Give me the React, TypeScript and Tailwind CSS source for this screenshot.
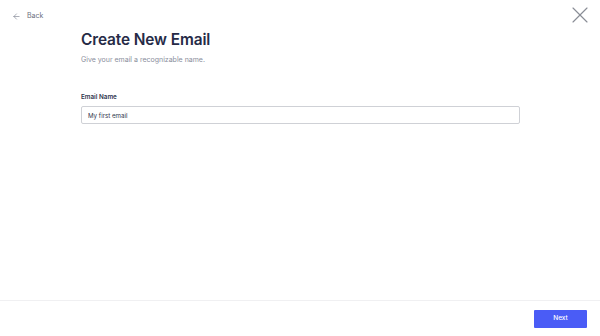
import { ArrowLeft, X } from "lucide-react";

export default function App() {
  return (
    <div className="flex h-[336px] w-[600px] flex-col bg-white font-['Inter',sans-serif] text-[#2a2f4a]">
      <header className="flex h-[32px] items-start justify-between">
        <button className="mt-[11px] ml-[12px] flex items-center gap-[6px] text-[7px] text-[#6b7080]">
          <ArrowLeft className="h-[9px] w-[9px]" strokeWidth={1.5} />
          Back
        </button>
        <button className="mt-[1px] mr-[6px] text-[#8a8d96]">
          <X className="h-[28px] w-[28px]" strokeWidth={1} />
        </button>
      </header>

      <main className="flex-1 pl-[81px] pr-[81px]">
        <h1 className="text-[15.4px] font-semibold leading-none tracking-[-0.1px] text-[#262b47]">
          Create New Email
        </h1>
        <p className="mt-[8px] text-[7px] leading-[9px] text-[#8a8e9c]">
          Give your email a recognizable name.
        </p>

        <label className="mt-[29px] block text-[6.3px] leading-[8px] font-semibold text-[#2f344d]">
          Email Name
        </label>
        <div className="mt-[5px] flex h-[18px] w-[439px] items-center rounded-[2px] border border-[#cfd1d6] px-[6px] text-[6.2px] text-[#2f344d]">
          My first email
        </div>
      </main>

      <footer className="flex h-[36px] items-start justify-end border-t border-[#f0f0f2] pt-[9px] pr-[13px]">
        <button className="flex h-[18px] w-[53px] items-center justify-center rounded-[1px] bg-[#4a5cf6] text-[6.5px] font-medium text-white">
          Next
        </button>
      </footer>
    </div>
  );
}
